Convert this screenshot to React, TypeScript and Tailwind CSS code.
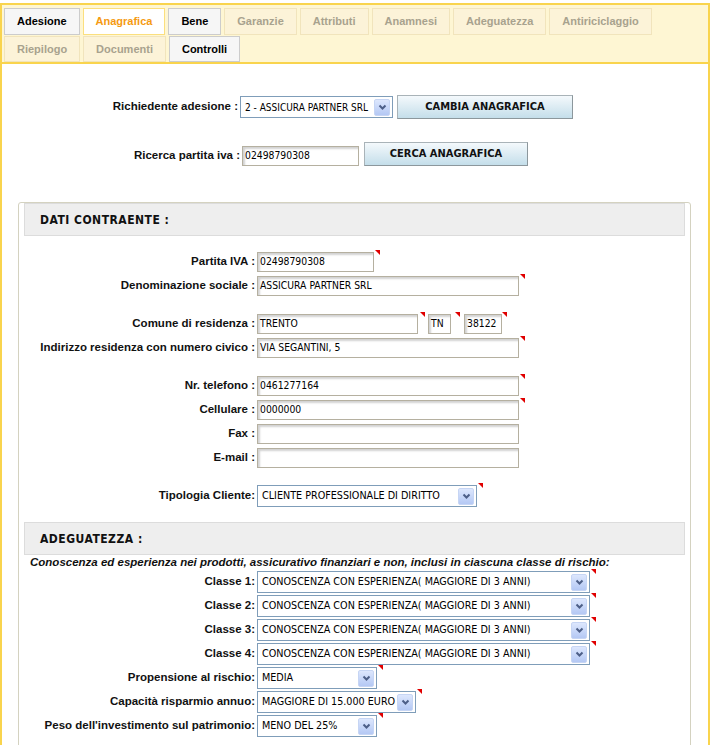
import React from "react";

const narrow = "font-['Liberation_Sans_Narrow','DejaVu_Sans_Condensed',sans-serif]";

function Req({ pos = "left-[calc(100%+1px)]" }: { pos?: string }) {
  return (
    <span
      className={`absolute ${pos} top-[-2px] w-0 h-0 border-t-[5px] border-l-[5px] border-t-[#e00000] border-l-transparent`}
    />
  );
}

function Field({ w, value = "", req = false, pos }: { w: string; value?: string; req?: boolean; pos?: string }) {
  return (
    <div className="relative">
      <div
        className={`${w} h-[20px] border border-[#b5b0a0] bg-white shadow-[inset_2px_2px_2px_rgba(0,0,0,0.18)] flex items-center pl-[2px] text-[10.3px] text-black ${narrow} whitespace-nowrap overflow-hidden`}
      >
        {value}
      </div>
      {req && <Req pos={pos} />}
    </div>
  );
}

function Arrow() {
  return (
    <div className="w-[16px] h-[17px] rounded-[2px] border border-[#c6d5f4] bg-linear-to-b from-[#dde7fd] to-[#b4c8f4] flex items-center justify-center">
      <svg width="9" height="7" viewBox="0 0 9 7">
        <polyline points="1.5,1.5 4.5,4.5 7.5,1.5" fill="none" stroke="#4d5f88" strokeWidth="2" />
      </svg>
    </div>
  );
}

function Select({
  w,
  value,
  req = true,
  size = "text-[10.7px]",
}: {
  w: string;
  value: string;
  req?: boolean;
  size?: string;
}) {
  return (
    <div className="relative">
      <div
        className={`${w} h-[22px] border border-[#7f9db9] bg-white flex items-center pl-[4px] pr-[2px] ${size} text-black ${narrow}`}
      >
        <span className="flex-1 whitespace-nowrap overflow-hidden">{value}</span>
        <Arrow />
      </div>
      {req && <Req />}
    </div>
  );
}

function Button({ w, label }: { w: string; label: string }) {
  return (
    <div
      className={`${w} h-[24px] border border-[#a9b3b8] border-b-[#8c979c] border-r-[#8c979c] bg-linear-to-b from-[#f4f9fc] to-[#c4deea] flex items-center justify-center text-[11px] font-bold text-[#111] ${narrow}`}
    >
      {label}
    </div>
  );
}

function Row({ label, children, mt, h = "h-[20px]" }: { label: string; children: React.ReactNode; mt: string; h?: string }) {
  return (
    <div className={`flex items-center ${h} ${mt}`}>
      <div className="w-[231px] mr-[2px] text-right text-[11.5px] font-bold text-[#111] whitespace-nowrap">{label}</div>
      {children}
    </div>
  );
}

function Header({ title, mt = "" }: { title: string; mt?: string }) {
  return (
    <div className={`h-[33px] border border-[#dcdcdc] bg-[#eeeeee] flex items-center pl-[15px] ${mt}`}>
      <span className={`text-[12px] font-bold text-[#111] tracking-[0.5px] ${narrow}`}>{title}</span>
    </div>
  );
}

const activeTab = "bg-[#f6f6f6] border-[#cccccc] text-black";
const currentTab = "bg-white border-[#fbdf7e] text-[#f59a12]";
const offTab = "bg-[#fcf3d8] border-[#f1e4bc] text-[#a8a28e]";

function Tab({ label, kind, h }: { label: string; kind: string; h: string }) {
  return <div className={`${h} px-[12px] border flex items-center text-[11px] font-bold ${kind}`}>{label}</div>;
}

export default function App() {
  const classe = "CONOSCENZA CON ESPERIENZA( MAGGIORE DI 3 ANNI)";
  return (
    <div className="w-[712px] h-[745px] overflow-hidden bg-white font-['Liberation_Sans',Arial,sans-serif]">
      <div className="w-[710px] mt-[3px] border-x-2 border-t-2 border-[#f9d44d] h-[760px]">
        {/* tabs */}
        <div className="bg-[#fef6d3] border-b-2 border-[#f9d44d] pt-[3px] pl-[2px] flex flex-col gap-[1px]">
          <div className="flex gap-[3px]">
            <Tab h="h-[27px]" label="Adesione" kind={activeTab} />
            <Tab h="h-[27px]" label="Anagrafica" kind={currentTab} />
            <Tab h="h-[27px]" label="Bene" kind={activeTab} />
            <Tab h="h-[27px]" label="Garanzie" kind={offTab} />
            <Tab h="h-[27px]" label="Attributi" kind={offTab} />
            <Tab h="h-[27px]" label="Anamnesi" kind={offTab} />
            <Tab h="h-[27px]" label="Adeguatezza" kind={offTab} />
            <Tab h="h-[27px]" label="Antiriciclaggio" kind={offTab} />
          </div>
          <div className="flex gap-[3px]">
            <Tab h="h-[26px]" label="Riepilogo" kind={offTab} />
            <Tab h="h-[26px]" label="Documenti" kind={offTab} />
            <Tab h="h-[26px]" label="Controlli" kind={activeTab} />
          </div>
        </div>

        {/* search */}
        <div className="flex items-center mt-[31px] h-[24px]">
          <div className="w-[236px] mr-[2px] text-right text-[11.5px] font-bold text-[#111]">Richiedente adesione :</div>
          <Select w="w-[153px]" value="2 - ASSICURA PARTNER SRL" req={false} size="text-[10px]" />
          <div className="ml-[4px]">
            <Button w="w-[176px]" label="CAMBIA ANAGRAFICA" />
          </div>
        </div>
        <div className="flex items-start mt-[23px]">
          <div className="flex items-center h-[20px] mt-[4px]">
            <div className="w-[238px] mr-[2px] text-right text-[11.5px] font-bold text-[#111]">Ricerca partita iva :</div>
            <Field w="w-[117px]" value="02498790308" />
          </div>
          <div className="ml-[5px]">
            <Button w="w-[164px]" label="CERCA ANAGRAFICA" />
          </div>
        </div>

        {/* panel */}
        <div className="ml-[16px] w-[673px] mt-[36px] border border-[#d4d2c0] rounded-t-[3px] px-[5px] pb-[20px]">
          <Header title="DATI CONTRAENTE :" />
          <Row label="Partita IVA :" mt="mt-[16px]">
            <Field w="w-[117px]" value="02498790308" req />
          </Row>
          <Row label="Denominazione sociale :" mt="mt-[4px]">
            <Field w="w-[262px]" value="ASSICURA PARTNER SRL" req />
          </Row>
          <Row label="Comune di residenza :" mt="mt-[18px]">
            <Field w="w-[161px]" value="TRENTO" req pos="left-[calc(100%+2px)]" />
            <div className="ml-[10px]">
              <Field w="w-[23px]" value="TN" req pos="left-[calc(100%+4px)]" />
            </div>
            <div className="ml-[13px]">
              <Field w="w-[38px]" value="38122" req pos="left-[calc(100%+0px)]" />
            </div>
          </Row>
          <Row label="Indirizzo residenza con numero civico :" mt="mt-[4px]">
            <Field w="w-[262px]" value="VIA SEGANTINI, 5" req />
          </Row>
          <Row label="Nr. telefono :" mt="mt-[18px]">
            <Field w="w-[262px]" value="0461277164" req />
          </Row>
          <Row label="Cellulare :" mt="mt-[4px]">
            <Field w="w-[262px]" value="0000000" req />
          </Row>
          <Row label="Fax :" mt="mt-[4px]">
            <Field w="w-[262px]" />
          </Row>
          <Row label="E-mail :" mt="mt-[4px]">
            <Field w="w-[262px]" />
          </Row>
          <Row label="Tipologia Cliente:" mt="mt-[17px]" h="h-[22px]">
            <Select w="w-[220px]" value="CLIENTE PROFESSIONALE DI DIRITTO" />
          </Row>

          <Header title="ADEGUATEZZA :" mt="mt-[15px]" />
          <div className="h-[14px] leading-[14px] pl-[6px] text-[11.5px] font-bold italic text-[#111] whitespace-nowrap">
            Conoscenza ed esperienza nei prodotti, assicurativo finanziari e non, inclusi in ciascuna classe di rischio:
          </div>
          <Row label="Classe 1:" mt="mt-[2px]" h="h-[22px]">
            <Select w="w-[333px]" value={classe} />
          </Row>
          <Row label="Classe 2:" mt="mt-[2px]" h="h-[22px]">
            <Select w="w-[333px]" value={classe} />
          </Row>
          <Row label="Classe 3:" mt="mt-[2px]" h="h-[22px]">
            <Select w="w-[333px]" value={classe} />
          </Row>
          <Row label="Classe 4:" mt="mt-[2px]" h="h-[22px]">
            <Select w="w-[333px]" value={classe} />
          </Row>
          <Row label="Propensione al rischio:" mt="mt-[2px]" h="h-[22px]">
            <Select w="w-[120px]" value="MEDIA" />
          </Row>
          <Row label="Capacità risparmio annuo:" mt="mt-[2px]" h="h-[22px]">
            <Select w="w-[159px]" value="MAGGIORE DI 15.000 EURO" />
          </Row>
          <Row label="Peso dell'investimento sul patrimonio:" mt="mt-[2px]" h="h-[22px]">
            <Select w="w-[120px]" value="MENO DEL 25%" />
          </Row>
        </div>
      </div>
    </div>
  );
}
